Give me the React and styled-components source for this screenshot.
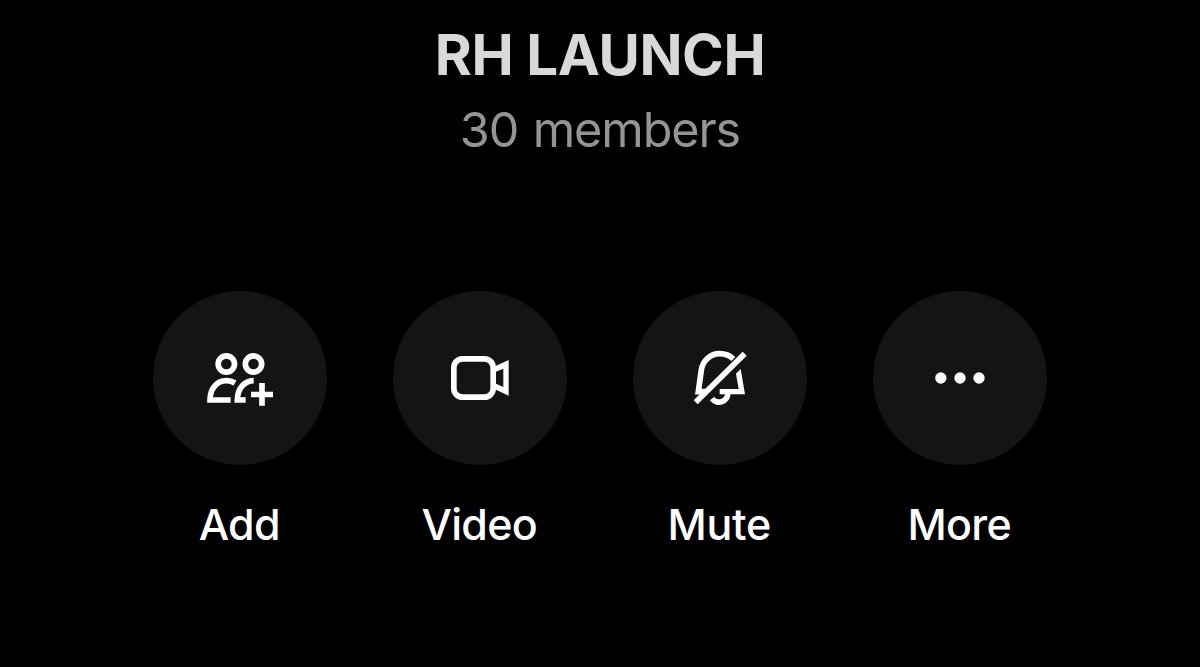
import React from "react";
import styled, { createGlobalStyle } from "styled-components";

const GlobalStyle = createGlobalStyle`
  body { margin: 0; background: #000; }
`;

const Screen = styled.main`
  box-sizing: border-box;
  height: 667px;
  padding-top: 20px;
  overflow: hidden;
  display: flex;
  flex-direction: column;
  align-items: center;
  background: #000;
  color: #fff;
  font-family: Inter, "Liberation Sans", sans-serif;
`;

const Header = styled.header`
  height: 270.5px;
  text-align: center;
`;

const Title = styled.h1`
  margin: 0;
  font-size: 56.5px;
  line-height: 70px;
  font-weight: 700;
  letter-spacing: -0.4px;
  color: #d9d9d9;
`;

const Subtitle = styled.p`
  margin: 5px 0 0;
  font-size: 48.5px;
  line-height: 70px;
  font-weight: 400;
  letter-spacing: -1.1px;
  word-spacing: 2px;
  color: #949494;
`;

const Actions = styled.nav`
  display: flex;
`;

const Action = styled.button`
  width: 240px;
  padding: 0;
  border: 0;
  background: none;
  color: inherit;
  font: inherit;
  display: flex;
  flex-direction: column;
  align-items: center;
  gap: 28.5px;
`;

const Disc = styled.span`
  width: 174.5px;
  height: 174.5px;
  border-radius: 50%;
  background: #141414;
  display: flex;
  align-items: center;
  justify-content: center;
`;

const Label = styled.span`
  padding-right: 1.5px;
  font-size: 43px;
  line-height: 60px;
  font-weight: 500;
  letter-spacing: ${({ $spacing }) => $spacing}px;
`;

const Icon = styled.svg.attrs({ viewBox: "0 0 270 228", "aria-hidden": true })`
  width: 90px;
  height: 76px;
  fill: none;
  stroke: #fff;
  stroke-width: 17;
`;

const AddIcon = () => (
  <Icon>
    <circle cx="94" cy="72" r="24.5" />
    <circle cx="175.5" cy="72" r="24.5" />
    <path d="M120 129C112 124 103 122 94 122C66 122 45 146 45 180H107" />
    <path d="M176 122C148 123 127 146 127 180H152" />
    <path d="M168 163.5H234M201 129V197" />
  </Icon>
);

const VideoIcon = () => (
  <Icon>
    <rect x="56.5" y="56.5" width="118" height="115" rx="26" />
    <path
      d="M180 79L221 60V167L180 148ZM183 95V131L205 141V86Z"
      fill="#fff"
      fillRule="evenodd"
      stroke="none"
    />
  </Icon>
);

const MuteIcon = () => (
  <Icon>
    <path d="M62 187L209 41" />
    <path d="M90 155H70L79 90C83 62 106 41 134 41C150 41 165 47 175 57" />
    <path d="M183 101L197 87L210 163H134V147H191Z" fill="#fff" stroke="none" />
    <path d="M111 176A26 25 0 0 0 158 160" />
  </Icon>
);

const MoreIcon = () => (
  <Icon>
    {[77.5, 135, 192].map((x) => (
      <circle key={x} cx={x} cy="114" r="17" fill="#fff" stroke="none" />
    ))}
  </Icon>
);

const actions = [
  { label: "Add", Glyph: AddIcon, spacing: -0.7 },
  { label: "Video", Glyph: VideoIcon, spacing: -0.7 },
  { label: "Mute", Glyph: MuteIcon, spacing: -0.3 },
  { label: "More", Glyph: MoreIcon, spacing: -0.7 },
];

export default function App() {
  return (
    <Screen>
      <GlobalStyle />
      <Header>
        <Title>RH LAUNCH</Title>
        <Subtitle>30 members</Subtitle>
      </Header>
      <Actions>
        {actions.map(({ label, Glyph, spacing }) => (
          <Action key={label}>
            <Disc>
              <Glyph />
            </Disc>
            <Label $spacing={spacing}>{label}</Label>
          </Action>
        ))}
      </Actions>
    </Screen>
  );
}
